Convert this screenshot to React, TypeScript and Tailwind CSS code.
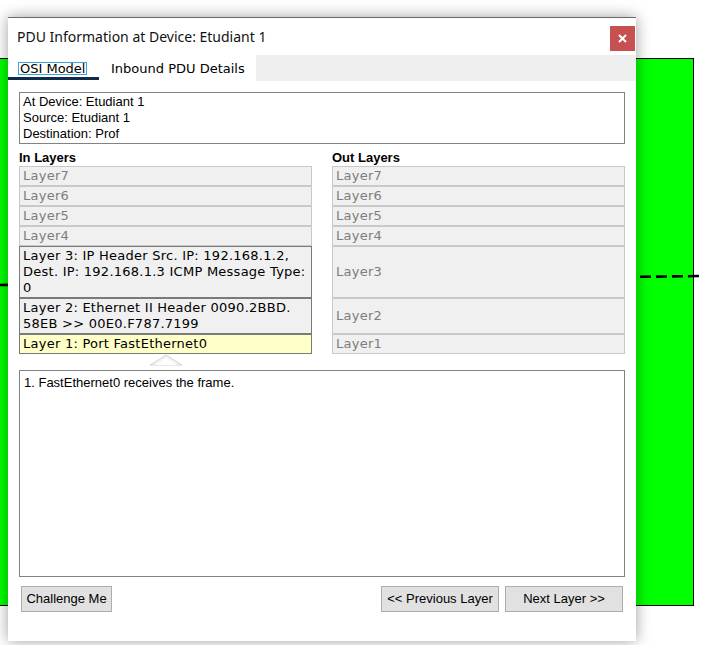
import React from 'react'

type LayerRow = {
  lines: string[]
  active?: boolean
  current?: boolean
  h: string
}

const inLayers: LayerRow[] = [
  { lines: ['Layer7'], h: 'h-[20px]' },
  { lines: ['Layer6'], h: 'h-[20px]' },
  { lines: ['Layer5'], h: 'h-[20px]' },
  { lines: ['Layer4'], h: 'h-[20px]' },
  {
    lines: ['Layer 3: IP Header Src. IP: 192.168.1.2,', 'Dest. IP: 192.168.1.3 ICMP Message Type:', '0'],
    active: true,
    h: 'h-[52px]',
  },
  { lines: ['Layer 2: Ethernet II Header 0090.2BBD.', '58EB >> 00E0.F787.7199'], active: true, h: 'h-[36px]' },
  { lines: ['Layer 1: Port FastEthernet0'], active: true, current: true, h: 'h-[20px]' },
]

const outLayers: LayerRow[] = [
  { lines: ['Layer7'], h: 'h-[20px]' },
  { lines: ['Layer6'], h: 'h-[20px]' },
  { lines: ['Layer5'], h: 'h-[20px]' },
  { lines: ['Layer4'], h: 'h-[20px]' },
  { lines: ['Layer3'], h: 'h-[52px]' },
  { lines: ['Layer2'], h: 'h-[36px]' },
  { lines: ['Layer1'], h: 'h-[20px]' },
]

function LayerBox({ row }: { row: LayerRow }) {
  const tone = row.current
    ? 'border-[#7a7a7a] bg-[#ffffc8] text-black'
    : row.active
      ? 'border-[#7a7a7a] bg-[#f0f0f0] text-black'
      : 'border-[#c9c9c9] bg-[#f0f0f0] text-[#7d7d7d]'
  return (
    <div className={`flex flex-col justify-center overflow-hidden border px-[3px] py-[1px] ${row.h} ${tone}`}>
      {row.lines.map((line, i) => (
        <span key={i} className="whitespace-nowrap text-[13px] leading-[16px] tracking-[0.25px]">
          {line}
        </span>
      ))}
    </div>
  )
}

function Column({ title, rows }: { title: string; rows: LayerRow[] }) {
  return (
    <div className="flex w-[293px] flex-col">
      <h3 className="mt-[6px] font-['Liberation_Sans',Arial,sans-serif] text-[13px] font-bold leading-[16px] text-black">
        {title}
      </h3>
      <div className="flex flex-col font-['DejaVu_Sans',Verdana,sans-serif]">
        {rows.map((row, i) => (
          <LayerBox key={i} row={row} />
        ))}
      </div>
    </div>
  )
}

export default function App() {
  return (
    <div className="relative h-[645px] w-[702px] overflow-hidden bg-white">
      {/* canvas behind the dialog */}
      <div className="absolute left-[-2px] top-[58px] h-[548px] w-[696px] border border-black bg-[#00ff00]" />
      <svg className="absolute left-0 top-0" width="702" height="645">
        <line x1="0" y1="285" x2="702" y2="276" stroke="#000" strokeWidth="2.6" strokeDasharray="11 5" />
      </svg>

      {/* dialog window */}
      <div className="absolute left-[8px] top-[17px] flex h-[624px] w-[628px] flex-col border-t border-[#6b6b6b] bg-white shadow-[0_0_14px_rgba(0,0,0,0.38)]">
        <div className="flex h-[37px] items-start justify-between">
          <span className="ml-[9px] mt-[9px] font-['Noto_Sans',sans-serif] text-[14px] leading-[20px] text-[#111]">
            PDU Information at Device: Etudiant 1
          </span>
          <button className="mr-[1px] mt-[8px] flex h-[25px] w-[25px] items-center justify-center bg-[#c75050]">
            <svg width="9" height="9" viewBox="0 0 9 9">
              <path d="M1 1L8 8M8 1L1 8" stroke="#fff" strokeWidth="2" />
            </svg>
          </button>
        </div>

        <div className="flex h-[26px] bg-[#efefef] font-['DejaVu_Sans',Verdana,sans-serif] text-[13px] text-black">
          <div className="relative flex w-[91px] items-center bg-white">
            <span className="ml-[10px] border border-[#3aa8e0] px-[1px] leading-[11px]">OSI Model</span>
            <div className="absolute bottom-[1px] left-0 h-[3px] w-[91px] bg-[#11294a]" />
          </div>
          <div className="flex w-[157px] items-center bg-white pl-[12px] leading-[15px]">Inbound PDU Details</div>
        </div>

        <div className="flex flex-1 flex-col px-[11px]">
          <div className="mt-[11px] h-[52px] border border-[#828282] px-[3px] py-[1px] font-['Liberation_Sans',Arial,sans-serif] text-[13px] leading-[16px] text-black">
            <div>At Device: Etudiant 1</div>
            <div>Source: Etudiant 1</div>
            <div>Destination: Prof</div>
          </div>

          <div className="flex gap-[20px]">
            <div className="flex flex-col">
              <Column title="In Layers" rows={inLayers} />
              <div className="flex h-[16px] justify-center">
                <svg width="34" height="12" viewBox="0 0 34 12">
                  <polygon points="1,11 17,1 33,11" fill="#f3f3f3" stroke="#d4d4d4" strokeWidth="1" />
                  <polygon points="6,11 17,4 28,11" fill="#fff" />
                </svg>
              </div>
            </div>
            <Column title="Out Layers" rows={outLayers} />
          </div>

          <div className="h-[207px] border border-[#828282] px-[4px] pt-[4px] font-['Liberation_Sans',Arial,sans-serif] text-[13px] leading-[16px] text-black">
            1. FastEthernet0 receives the frame.
          </div>

          <div className="mt-[9px] flex items-start justify-between px-[2px] font-['Liberation_Sans',Arial,sans-serif] text-[13px] text-black">
            <button className="h-[26px] w-[91px] border border-[#adadad] bg-[#e1e1e1]">Challenge Me</button>
            <div className="flex gap-[6px]">
              <button className="h-[26px] w-[118px] border border-[#adadad] bg-[#e1e1e1]">&lt;&lt; Previous Layer</button>
              <button className="h-[26px] w-[118px] border border-[#adadad] bg-[#e1e1e1]">Next Layer &gt;&gt;</button>
            </div>
          </div>
        </div>
      </div>
    </div>
  )
}
